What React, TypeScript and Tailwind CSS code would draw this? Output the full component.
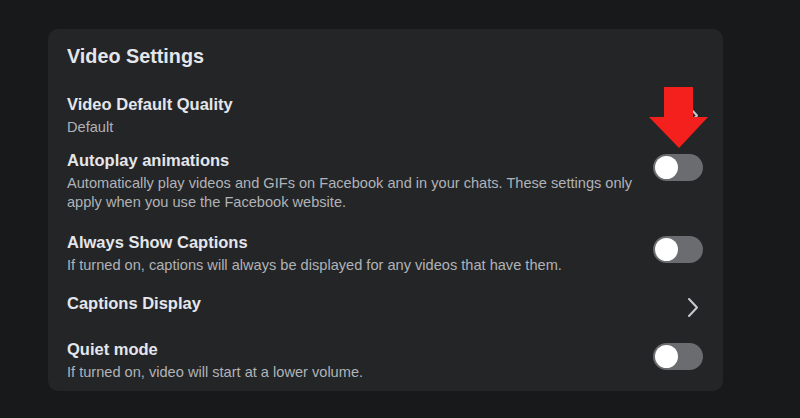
import React from 'react';

type Item = {
  title: string;
  desc?: string;
  kind: 'toggle' | 'link';
  top: string;
};

const items: Item[] = [
  { title: 'Video Default Quality', desc: 'Default', kind: 'link', top: 'mt-[25px]' },
  {
    title: 'Autoplay animations',
    desc: 'Automatically play videos and GIFs on Facebook and in your chats. These settings only apply when you use the Facebook website.',
    kind: 'toggle',
    top: 'mt-[12px]',
  },
  {
    title: 'Always Show Captions',
    desc: 'If turned on, captions will always be displayed for any videos that have them.',
    kind: 'toggle',
    top: 'mt-[19px]',
  },
  { title: 'Captions Display', kind: 'link', top: 'mt-[17px]' },
  {
    title: 'Quiet mode',
    desc: 'If turned on, video will start at a lower volume.',
    kind: 'toggle',
    top: 'mt-[24px]',
  },
];

function Toggle() {
  return (
    <div className="mt-[5px] flex h-[27px] w-[50px] shrink-0 items-center rounded-full bg-[#6b6c70] px-[2px]">
      <div className="h-[23px] w-[23px] rounded-full bg-white" />
    </div>
  );
}

function Chevron({ offset }: { offset: boolean }) {
  return (
    <svg
      width="12"
      height="21"
      viewBox="0 0 12 21"
      className={`mr-[4px] shrink-0 self-center ${offset ? 'translate-y-[4px]' : ''}`}
    >
      <path d="M2 2 L10 10.5 L2 19" fill="none" stroke="#c8cacf" strokeWidth="2" strokeLinecap="round" strokeLinejoin="round" />
    </svg>
  );
}

export default function App() {
  return (
    <div
      className="h-[418px] w-[800px] bg-[#18191a] pl-[48px] pt-[29px]"
      style={{ fontFamily: '"Liberation Sans", Arial, sans-serif' }}
    >
      <div className="relative w-[675px] rounded-[10px] bg-[#242526] pb-[9px] pl-[19px] pr-[20px] pt-[15px]">
        <h2 className="text-[19.8px] font-bold leading-[24px] text-[#e4e6eb]">Video Settings</h2>

        {items.map((item) => (
          <div key={item.title} className={`flex items-start justify-between ${item.top}`}>
            <div className="max-w-[575px]">
              <div className="text-[16.5px] font-bold leading-[22px] text-[#e4e6eb]">{item.title}</div>
              {item.desc && (
                <div className="mt-[3px] text-[14.6px] leading-[19px] text-[#b0b3b8]">{item.desc}</div>
              )}
            </div>
            {item.kind === 'toggle' ? <Toggle /> : <Chevron offset={!item.desc} />}
          </div>
        ))}

        {/* red arrow annotation */}
        <svg
          width="60"
          height="62"
          viewBox="0 0 60 62"
          className="absolute left-[601px] top-[58px]"
        >
          <polygon points="15,0 44,0 44,30 59,30 30,61 0,30 15,30" fill="#f4201e" />
        </svg>
      </div>
    </div>
  );
}
